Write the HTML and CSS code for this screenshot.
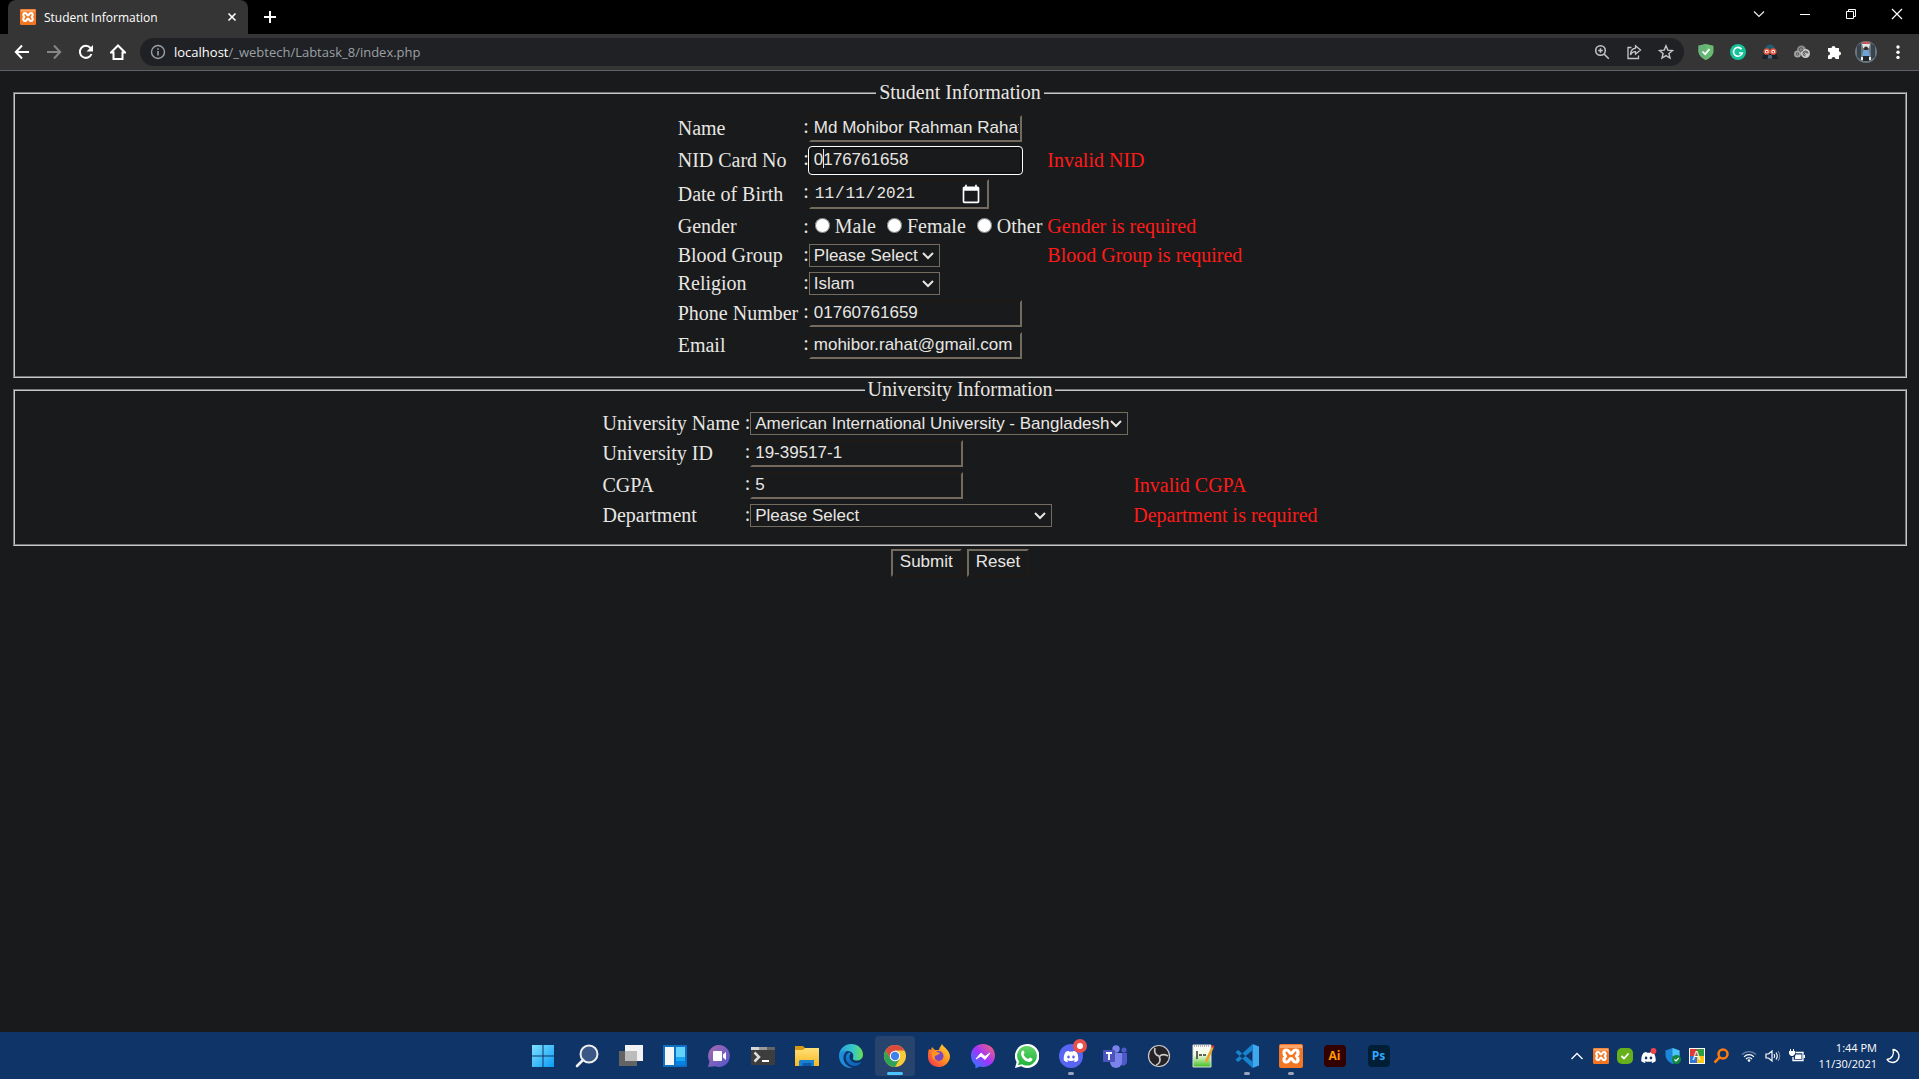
FILE: index.html
```html
<!DOCTYPE html>
<html lang="en">
<head>
<meta charset="utf-8">
<title>Student Information</title>
<link rel="stylesheet" href="styles.css">
</head>
<body>
<svg class="defs" aria-hidden="true">
  <defs>
    <linearGradient id="g-win" x1="0" y1="0" x2="1" y2="1"><stop offset="0" stop-color="#7fe0ff"/><stop offset="1" stop-color="#0a9cf5"/></linearGradient>
    <linearGradient id="g-chat" x1="0" y1="0" x2="1" y2="1"><stop offset="0" stop-color="#a86bb0"/><stop offset="1" stop-color="#5356cc"/></linearGradient>
    <linearGradient id="g-folder" x1="0" y1="0" x2="0" y2="1"><stop offset="0" stop-color="#ffe07a"/><stop offset="1" stop-color="#f8b820"/></linearGradient>
    <linearGradient id="g-edge" x1="0" y1="0" x2="1" y2="0"><stop offset="0" stop-color="#2a9fe0"/><stop offset=".6" stop-color="#36c8c8"/><stop offset="1" stop-color="#6be04c"/></linearGradient>
    <linearGradient id="g-edge2" x1="0" y1="0" x2="0" y2="1"><stop offset="0" stop-color="#1689dc"/><stop offset="1" stop-color="#0b62b8"/></linearGradient>
    <linearGradient id="g-fox" x1="1" y1="0" x2="0" y2="1"><stop offset="0" stop-color="#ffe43c"/><stop offset=".5" stop-color="#ff8a1e"/><stop offset="1" stop-color="#f0285a"/></linearGradient>
    <linearGradient id="g-msg" x1="0" y1="1" x2="1" y2="0"><stop offset="0" stop-color="#1a88ff"/><stop offset=".5" stop-color="#a033ff"/><stop offset="1" stop-color="#ff6a68"/></linearGradient>
    <linearGradient id="g-wa" x1="0" y1="0" x2="0" y2="1"><stop offset="0" stop-color="#5fd668"/><stop offset="1" stop-color="#22b13c"/></linearGradient>
    <linearGradient id="g-npp" x1="0" y1="0" x2="0" y2="1"><stop offset="0" stop-color="#fff"/><stop offset=".45" stop-color="#f0fbe0"/><stop offset="1" stop-color="#3fbf20"/></linearGradient>
    <symbol id="xampp" viewBox="0 0 24 24">
      <rect width="24" height="24" rx="2" fill="#f37623"/><path d="M1 1h22v3H1z" fill="#f9a468"/>
      <path d="M12 9.500C10 9.500 10.500 6 7.500 6S4 9.500 6.500 12C4 14.500 4.500 18 7.500 18s2.500-3.500 4.500-3.500S13.500 18 16.500 18s3.500-3.500 1-6c2.500-2.500 2-6-1-6S14 9.500 12 9.500z" fill="none" stroke="#fff" stroke-width="3.200" stroke-linejoin="round"/>
    </symbol>
    <symbol id="discord" viewBox="0 0 24 18">
      <path d="M20.300 1.500A19.800 19.800 0 0 0 15.400 0l-.7 1.300a18 18 0 0 0-5.400 0L8.600 0a19.800 19.800 0 0 0-4.900 1.500C.6 6.100-.3 10.600.1 15c2.100 1.500 4 2.400 6 3l1.300-2-2-1 .5-.4a14 14 0 0 0 12.200 0l.5.4-2 1 1.300 2c2-.6 4-1.500 6-3 .5-5.200-.8-9.700-3.600-13.500zM8 12.300c-1.200 0-2.100-1-2.100-2.400S6.800 7.500 8 7.500s2.200 1.100 2.100 2.400c0 1.300-.9 2.400-2.100 2.400zm8 0c-1.200 0-2.100-1-2.100-2.400s.9-2.400 2.100-2.400 2.200 1.100 2.100 2.400c0 1.300-.9 2.400-2.100 2.400z"/>
    </symbol>
  </defs>
</svg>

<header class="browser">
  <div class="titlebar">
    <div class="tab">
      <svg class="i16" viewBox="0 0 24 24"><use href="#xampp"/></svg>
      <span class="tab-title">Student Information</span>
      <button class="icon-btn" aria-label="Close tab"><svg class="i16" viewBox="0 0 16 16"><path d="M4.500 4.500l7 7M11.500 4.500l-7 7" stroke="#fff" stroke-width="1.600"/></svg></button>
    </div>
    <button class="icon-btn new-tab" aria-label="New tab"><svg class="i16" viewBox="0 0 16 16"><path d="M8 2v12M2 8h12" stroke="#fff" stroke-width="2"/></svg></button>
    <div class="window-controls">
      <button class="icon-btn" aria-label="Search tabs"><svg class="i16" viewBox="0 0 16 16"><path d="M3 5.500l5 5 5-5" fill="none" stroke="#eee" stroke-width="1.200"/></svg></button>
      <button class="icon-btn" aria-label="Minimize"><svg class="i16" viewBox="0 0 16 16"><path d="M3 8.500h10" stroke="#fff"/></svg></button>
      <button class="icon-btn" aria-label="Restore"><svg class="i16" viewBox="0 0 16 16"><path d="M3.500 5.500h7v7h-7zM5.500 5.500v-2h7v7h-2" fill="none" stroke="#fff"/></svg></button>
      <button class="icon-btn" aria-label="Close"><svg class="i16" viewBox="0 0 16 16"><path d="M3 3l10 10M13 3L3 13" stroke="#fff" stroke-width="1.200"/></svg></button>
    </div>
  </div>
  <div class="toolbar">
    <nav class="nav-buttons">
      <button class="icon-btn" aria-label="Back"><svg class="i16" viewBox="0 0 16 16"><path d="M15 8H2M8 1.500L1.800 8 8 14.500" fill="none" stroke="#fff" stroke-width="2"/></svg></button>
      <button class="icon-btn" aria-label="Forward"><svg class="i16" viewBox="0 0 16 16"><path d="M1 8h13M8 1.500L14.200 8 8 14.500" fill="none" stroke="#868686" stroke-width="2"/></svg></button>
      <button class="icon-btn" aria-label="Reload"><svg class="i16" viewBox="0 0 16 16"><path d="M13.500 10A6 6 0 1 1 12.500 4" fill="none" stroke="#fff" stroke-width="2"/><path d="M15 1v6.500H8.500z" fill="#fff"/></svg></button>
      <button class="icon-btn" aria-label="Home"><svg class="i16" viewBox="0 0 16 16"><path d="M1 8.500l7-7 7 7h-2.500V15h-9V8.500z" fill="none" stroke="#fff" stroke-width="2"/></svg></button>
    </nav>
    <div class="omnibox">
      <svg class="i16" viewBox="0 0 16 16"><circle cx="8" cy="8" r="6.500" fill="none" stroke="#9aa0a6" stroke-width="1.400"/><path d="M8 7v4.500M8 4.200v1.600" stroke="#9aa0a6" stroke-width="1.600"/></svg>
      <a class="url" href="#"><span class="host">localhost</span>/_webtech/Labtask_8/index.php</a>
      <div class="omnibox-actions">
        <button class="icon-btn" aria-label="Zoom"><svg class="i16" viewBox="0 0 16 16"><circle cx="6.500" cy="6.500" r="4.800" fill="none" stroke="#c4c7c9" stroke-width="1.500"/><path d="M10 10l4.800 4.800M4.200 6.500h4.600M6.500 4.200v4.600" stroke="#c4c7c9" stroke-width="1.500"/></svg></button>
        <button class="icon-btn" aria-label="Share"><svg class="i16" viewBox="0 0 16 16"><path d="M5.500 3.500H2v11h10.500V11.500M9.500 1.800l5 4.200-5 4.200V7.700C7 7.700 5.500 8.500 4.500 11c0-4 2-6.300 5-6.800z" fill="none" stroke="#c4c7c9" stroke-width="1.300"/></svg></button>
        <button class="icon-btn" aria-label="Bookmark"><svg class="i16" viewBox="0 0 16 16"><path d="M8 1.800l1.800 4.300 4.700.4-3.600 3 1.100 4.600-4-2.500-4 2.500 1.100-4.600-3.600-3 4.700-.4z" fill="none" stroke="#c4c7c9" stroke-width="1.400"/></svg></button>
      </div>
    </div>
    <div class="extensions">
      <svg class="i16" viewBox="0 0 16 16"><path d="M8 0l7.500 1.800V7c0 4-3 7-7.500 9C3.500 14 .5 11 .5 7V1.800z" fill="#68bc71"/><path d="M8 0v16C3.500 14 .5 11 .5 7V1.800z" fill="#67b279"/><path d="M4.500 7.500l2.600 2.700 4.400-5" fill="none" stroke="#fff" stroke-width="1.800"/></svg>
      <svg class="i16" viewBox="0 0 16 16"><circle cx="8" cy="8" r="8" fill="#15c39a"/><path d="M11.500 5.200A4.400 4.400 0 1 0 12.200 9H9" fill="none" stroke="#fff" stroke-width="1.600"/></svg>
      <svg class="i16" viewBox="0 0 16 16"><path d="M8 0.500c4 0 5.500 3 5.500 6.500L16 15H0l2.500-8C2.500 3.500 4 .5 8 .5z" fill="#17222e"/><path d="M8 .5c3 0 4.800 2 5.200 4.500H2.800C3.200 2.500 5 .5 8 .5z" fill="#275a6e"/><circle cx="4.800" cy="7.500" r="2.600" fill="#fff" stroke="#e0563b" stroke-width="1.500"/><circle cx="11.200" cy="7.500" r="2.600" fill="#fff" stroke="#e0563b" stroke-width="1.500"/><path d="M4 7h1.600v1.600H4zM10.400 7H12v1.600h-1.600z" fill="#c22"/><path d="M6.500 11h3l1 3.500h-5z" fill="#53687c"/></svg>
      <svg class="i16" viewBox="0 0 16 16"><circle cx="7.500" cy="6" r="4.500" fill="#8c8c8c"/><circle cx="3.500" cy="10" r="3.500" fill="#a5a5a5"/><circle cx="11.500" cy="9.500" r="4.500" fill="#cfcfcf"/><g fill="none" stroke="#555"><circle cx="7" cy="5.500" r="1.800"/><circle cx="3.500" cy="10" r="1.300"/><path d="M14 9.500a2.500 2.500 0 1 0-2.500 2.500M12.800 9.500a1.200 1.200 0 1 0-1.200 1"/></g></svg>
      <svg class="i16" viewBox="0 0 16 16"><path d="M2 4h3.500a2 2 0 1 1 4 0H13v3.500a2 2 0 1 1 0 4V15H9.500a2 2 0 1 0-4 0H2v-3.500a2 2 0 1 0 0-4z" fill="#fff"/></svg>
      <svg class="i22" viewBox="0 0 22 22"><circle cx="11" cy="11" r="11" fill="#6b7780"/><path d="M2 5l4-3v17l-4-3zM16 2l4 3v11l-4 3z" fill="#39444d"/><path d="M7 .8h8V3H7z" fill="#c55b55"/><path d="M7 3h8l-1 4H8z" fill="#dfe5e8"/><circle cx="11" cy="7.500" r="2" fill="#3b2a22"/><path d="M8.500 9h5l1.500 6H7z" fill="#6fa3d8"/><path d="M8 15h6v5H8z" fill="#20262c"/><path d="M6 16h2v3H6zM14 16h2v3h-2z" fill="#f1f1f1"/></svg>
      <svg class="i16" viewBox="0 0 16 16"><g fill="#fff"><circle cx="8" cy="3" r="1.700"/><circle cx="8" cy="8.200" r="1.700"/><circle cx="8" cy="13.400" r="1.700"/></g></svg>
    </div>
  </div>
</header>

<main class="page">
  <form>
    <fieldset>
      <legend>Student Information</legend>
      <table>
        <tr><td><label for="name">Name</label></td><td>:<input class="field" id="name" type="text" value="Md Mohibor Rahman Rahat"></td><td></td></tr>
        <tr><td><label for="nid">NID Card No</label></td><td>:<span class="with-caret"><input class="field focused" id="nid" type="text" value="0176761658"></span></td><td class="error">Invalid NID</td></tr>
        <tr><td><label for="dob">Date of Birth</label></td><td>:<input class="field date" id="dob" type="date" value="2021-11-11"></td><td></td></tr>
        <tr class="choices"><td>Gender</td><td>:<input type="radio" name="gender" id="male"><label for="male"> Male</label> <input type="radio" name="gender" id="female"><label for="female"> Female</label> <input type="radio" name="gender" id="other"><label for="other"> Other</label></td><td class="error">Gender is required</td></tr>
        <tr><td><label for="blood">Blood Group</label></td><td>:<select class="w-small" id="blood"><option>Please Select</option></select></td><td class="error">Blood Group is required</td></tr>
        <tr><td><label for="religion">Religion</label></td><td>:<select class="w-small" id="religion"><option>Islam</option></select></td><td></td></tr>
        <tr><td><label for="phone">Phone Number</label></td><td>:<input class="field" id="phone" type="text" value="01760761659"></td><td></td></tr>
        <tr><td><label for="email">Email</label></td><td>:<input class="field" id="email" type="text" value="mohibor.rahat@gmail.com"></td><td></td></tr>
      </table>
    </fieldset>
    <fieldset>
      <legend>University Information</legend>
      <table>
        <tr><td><label for="uni">University Name</label></td><td>:<select class="w-large" id="uni"><option>American International University - Bangladesh</option></select></td><td></td></tr>
        <tr><td><label for="uid">University ID</label></td><td>:<input class="field" id="uid" type="text" value="19-39517-1"></td><td></td></tr>
        <tr><td><label for="cgpa">CGPA</label></td><td>:<input class="field" id="cgpa" type="text" value="5"></td><td class="error">Invalid CGPA</td></tr>
        <tr><td><label for="dept">Department</label></td><td>:<select class="w-medium" id="dept"><option>Please Select</option></select></td><td class="error">Department is required</td></tr>
      </table>
    </fieldset>
    <div class="actions"><button class="btn" type="button">Submit</button><button class="btn" type="reset">Reset</button></div>
  </form>
</main>

<footer class="taskbar">
  <div class="apps">
    <button class="app" aria-label="Start"><svg viewBox="0 0 24 24"><path d="M1 1h10.500v10.500H1zM12.500 1H23v10.500H12.500zM1 12.500h10.500V23H1zM12.500 12.500H23V23H12.500z" fill="url(#g-win)"/></svg></button>
    <button class="app" aria-label="Search"><svg viewBox="0 0 24 24"><circle cx="14" cy="10" r="8.500" fill="#3b5786" stroke="#eee" stroke-width="2"/><path d="M8 16l-6 6" stroke="#eee" stroke-width="2.600" stroke-linecap="round"/></svg></button>
    <button class="app" aria-label="Task view"><svg viewBox="0 0 24 24"><path d="M0 7h18v15H0z" fill="#636363"/><path d="M6 1h18v16H6z" fill="#f2f2f2"/><path d="M6 7h12v10H6z" fill="#bcbcbc"/></svg></button>
    <button class="app" aria-label="Widgets"><svg viewBox="0 0 24 24"><rect y="1" width="24" height="22" rx="1" fill="#0e6fc4"/><path d="M2 3h9v18H2z" fill="#f5f5f5"/><path d="M13 3h9v10h-9z" fill="#63d3fb"/><path d="M13 13h9v4h-9z" fill="#1aa5f5"/><path d="M13 17h9v4h-9z" fill="#0584e6"/></svg></button>
    <button class="app" aria-label="Chat"><svg viewBox="0 0 24 24"><path d="M12 1a11 11 0 1 1-4 21.300L1 23l1.500-5.500A11 11 0 0 1 12 1z" fill="url(#g-chat)"/><rect x="6" y="7" width="9" height="10" rx="1" fill="#fff"/><path d="M16 10.500l3-2.500v8l-3-2.500z" fill="#fff"/></svg></button>
    <button class="app" aria-label="Terminal"><svg viewBox="0 0 24 24"><path d="M0 3h24v18H0z" fill="#3d3d3d"/><path d="M0 3h8v3H0z" fill="#d5d5d5"/><path d="M8 3h8v3H8z" fill="#999"/><path d="M16 3h8v3h-8z" fill="#666"/><path d="M3.500 8.500L8 13l-4.500 4.500" fill="none" stroke="#ddd" stroke-width="2.500"/><path d="M11 16h7v2h-7z" fill="#fff"/></svg></button>
    <button class="app" aria-label="File Explorer"><svg viewBox="0 0 24 24"><path d="M0 2h8l3 3v4H0z" fill="#d69a10"/><path d="M0 6h8l2-2h14v18H0z" fill="url(#g-folder)"/><path d="M5 16h14v6H4v-5z" fill="#1c80d0"/><path d="M7.500 19h9v3h-9z" fill="#0b5ba8"/></svg></button>
    <button class="app" aria-label="Edge"><svg viewBox="0 0 24 24"><path d="M0 11C1 4 6 0 12 0c7 0 12 5 12 10.500 0 4-3 6-6.500 6-3 0-4-1.500-3.500-2.500C15 11 14 8 9.500 7 5 6.500 1.500 8 0 11z" fill="url(#g-edge)"/><path d="M0 12c0-4 4-6 8-5-2 1.500-4 4-3.500 8 .5 5 5 8 9.500 8.800C5.500 25 0 19 0 12z" fill="#1e8ddc"/><path d="M10 8.500c-4 2-4 7-1 10.500 3.500 4 10 4 13.500-1-5 2.500-12 .5-12-5.500 0-1.500.5-3 2-3.500z" fill="url(#g-edge2)"/></svg></button>
    <button class="app active" aria-label="Chrome"><svg viewBox="0 0 24 24"><circle cx="12" cy="12" r="11" fill="#f9cb38"/><path d="M2.500 6.500A11 11 0 0 1 21.500 6.500H12L7.300 14.700z" fill="#d94b3d"/><path d="M2.500 6.500A11 11 0 0 0 12 23l4.700-8.300H7.300z" fill="#2ea258"/><circle cx="12" cy="12" r="5.200" fill="#fff"/><circle cx="12" cy="12" r="4.200" fill="#3d82ea"/></svg></button>
    <button class="app" aria-label="Firefox"><svg viewBox="0 0 24 24"><path d="M2 5l2 1 1-3 3 3h4c0-2 2-4 3-6 1 3 7 5 8 12 0 6-5 11-11 11S1 19 1 13c0-3 0-5 1-8z" fill="url(#g-fox)"/><circle cx="11.500" cy="12" r="5" fill="#7b45c8"/><path d="M5 8c3-1 5 0 8 1-1 2-4 2-5 3-1 2 0 4 3 5-5 0-7-4-6-9z" fill="#ff9420"/></svg></button>
    <button class="app" aria-label="Messenger"><svg viewBox="0 0 24 24"><path d="M12 0c7 0 12 5 12 11.500S19 23 12 23l-3.500-.5L4.500 24.500 4.300 21C1.500 18.500 0 15.500 0 11.500 0 5 5 0 12 0z" fill="url(#g-msg)"/><path d="M5 15l5-6 4 3.500L19 9l-5 6.500-4-3.500z" fill="#fff" stroke="#fff"/></svg></button>
    <button class="app" aria-label="WhatsApp"><svg viewBox="0 0 24 24"><path d="M12 0a12 12 0 1 1-5.800 22.300L0 24l1.600-6A12 12 0 0 1 12 0z" fill="#fff"/><path d="M12 2a9.800 9.800 0 1 1-5 18.200L3 21.300l1-3.800A9.800 9.800 0 0 1 12 2z" fill="url(#g-wa)"/><path d="M8 6.500c1 0 1.500 2 1.500 2.500l-1 1.500c1 2 2.500 3.500 4.800 4.500l1.500-1.500c1 .3 2.700 1 2.700 1.500 0 2-2 3-3.500 3C9.500 17.500 6 12.500 6 9.500c0-1.500 1-3 2-3z" fill="#fff"/></svg></button>
    <button class="app running" aria-label="Discord"><svg viewBox="0 0 24 24"><circle cx="12" cy="12" r="12" fill="#5865f2"/><svg x="4.500" y="6.500" width="15" height="12" viewBox="0 0 24 18" fill="#fff"><use href="#discord"/></svg></svg><svg class="badge" viewBox="0 0 14 14"><circle cx="7" cy="7" r="7" fill="#e8504e"/><circle cx="7" cy="7" r="3" fill="#fff"/></svg></button>
    <button class="app" aria-label="Teams"><svg viewBox="0 0 24 24"><circle cx="13" cy="5" r="3.700" fill="#7b83eb"/><circle cx="21" cy="6" r="2.600" fill="#5059c9"/><path d="M17 9h7v8a4 4 0 0 1-6 4z" fill="#5059c9"/><path d="M7 9h12v9a6 6 0 0 1-12 0z" fill="#7b83eb"/><rect y="6" width="12" height="12" rx="1" fill="#4b53bc"/><path d="M3 9h6M6 9v7" stroke="#fff" stroke-width="1.800"/></svg></button>
    <button class="app" aria-label="OBS"><svg viewBox="0 0 24 24"><circle cx="12" cy="12" r="10.500" fill="#252225" stroke="#ccc" stroke-width="1.200"/><path d="M8 4c-1 4 0 7 4 8M21 12c-4-2-7-2-9 1M9 21c4-1 5-5 3-9" fill="none" stroke="#c8c8c8" stroke-width="1.700"/></svg></button>
    <button class="app" aria-label="Notepad++"><svg viewBox="0 0 24 24"><path d="M2 1h18v22H2z" fill="url(#g-npp)" stroke="#ddd"/><path d="M3 2h16" stroke="#777" stroke-dasharray="1 1"/><path d="M6 7v8M8 11h3M12 11h3" stroke="#333" stroke-width="1.500"/><path d="M21 2l2 1-6 14-3 2 .5-3.500z" fill="#eca22c"/><path d="M21 1l2.500 1-.8 2-2.400-1z" fill="#c33"/></svg></button>
    <button class="app running" aria-label="Visual Studio Code"><svg viewBox="0 0 24 24"><path d="M17.500 0L24 2.500v19L17.500 24z" fill="#3fa9f0"/><path d="M17.500 0v6.500L3 18l-2.500-2.200zM17.500 24v-6.500L3 6 .5 8.200z" fill="#1684cf"/></svg></button>
    <button class="app running" aria-label="XAMPP"><svg viewBox="0 0 24 24"><use href="#xampp"/></svg></button>
    <button class="app" aria-label="Illustrator"><span class="adobe ai">Ai</span></button>
    <button class="app" aria-label="Photoshop"><span class="adobe ps">Ps</span></button>
  </div>
  <div class="tray">
    <div class="tray-icons">
      <svg class="i16" viewBox="0 0 16 16"><path d="M2.500 11L8 5.500l5.500 5.500" fill="none" stroke="#fff" stroke-width="1.300"/></svg>
      <svg class="i16" viewBox="0 0 24 24"><use href="#xampp"/></svg>
      <svg class="i16" viewBox="0 0 16 16"><rect width="16" height="16" rx="5" fill="#66b01c"/><path d="M4.500 8l2.500 2.500 4.500-5" fill="none" stroke="#fff" stroke-width="1.800"/></svg>
      <svg class="i16" viewBox="0 0 16 16"><svg x="0" y="4" width="15" height="11" viewBox="0 0 24 18" fill="#fff"><use href="#discord"/></svg><circle cx="12.500" cy="3" r="2.900" fill="#f0434a"/></svg>
      <svg class="i16" viewBox="0 0 16 16"><path d="M7.500 0L14.500 2.500V7c0 4-3 7-7 9-4-2-7-5-7-9V2.500z" fill="#1d86d8"/><path d="M7.500 0L14.500 2.500V8h-7z" fill="#4cc2f5"/><circle cx="11.500" cy="11.500" r="4.500" fill="#118a3e"/><path d="M9.500 11.500l1.500 1.500 2.800-3" fill="none" stroke="#fff" stroke-width="1.200"/></svg>
      <span class="a-icon">A</span>
      <svg class="i16" viewBox="0 0 16 16"><circle cx="10" cy="6" r="4.500" fill="none" stroke="#ff7a0c" stroke-width="2.500"/><path d="M6.500 9.500L1.500 14.500" stroke="#ff7a0c" stroke-width="2.500"/></svg>
    </div>
    <div class="system-icons">
      <svg class="i16" viewBox="0 0 16 16"><g fill="none" stroke="#fff" stroke-width="1.200"><path d="M1 6.500a10 10 0 0 1 14 0" opacity=".4"/><path d="M3 8.800a7 7 0 0 1 10 0M5 11a4.200 4.200 0 0 1 6 0"/></g><circle cx="8" cy="12.500" r="1.300" fill="#fff"/></svg>
      <svg class="i16" viewBox="0 0 16 16"><g fill="none" stroke="#fff" stroke-width="1.200"><path d="M1 6h2.500L7 3v10L3.500 10H1zM9 6q1.500 2 0 4M11 4.500q2.500 3.500 0 7"/><path d="M13 3q3.500 5 0 10" opacity=".4"/></g></svg>
      <svg class="i16" viewBox="0 0 16 16"><path d="M6.500 4.500H14v8H4V9" fill="none" stroke="#fff" stroke-width="1.300"/><path d="M7 6.500h5.500v4.500H6V8zM14.500 7H16v3h-1.500zM0 3h6v3L4 8H2L0 6zM1 1h1v2H1zM4 1h1v2H4z" fill="#fff"/></svg>
    </div>
    <div class="clock"><span>1:44 PM</span><span>11/30/2021</span></div>
    <svg class="i16" viewBox="0 0 16 16"><path d="M8 1.500A6.500 6.500 0 1 1 2 11.500C7 11 9.500 6.500 8 1.500z" fill="none" stroke="#fff" stroke-width="1.300" stroke-linejoin="round"/></svg>
  </div>
</footer>
</body>
</html>
```

FILE: styles.css
```css
* { box-sizing: border-box; }

body {
  margin: 0;
  min-height: 100vh;
  display: flex;
  flex-direction: column;
  background: #181a1b;
  color: #e8e6e3;
  color-scheme: dark;
  font-family: "Liberation Serif", serif;
  font-size: 20px;
}

svg { display: block; flex: none; }
.defs { position: absolute; width: 0; height: 0; }
.i16 { width: 16px; height: 16px; }
.i22 { width: 22px; height: 22px; }
.icon-btn { display: block; margin: 0; padding: 0; border: 0; background: none; }

/* Browser frame */
.browser { font-family: "Open Sans", "Noto Sans", sans-serif; font-size: 12px; }
.titlebar { display: flex; align-items: center; height: 34px; padding-left: 8px; background: #000; }
.tab {
  display: flex;
  align-items: center;
  gap: 8px;
  width: 240px;
  height: 34px;
  padding: 0 8px 0 12px;
  border-radius: 8px 8px 0 0;
  background: #353535;
  color: #fff;
  font-size: 12px;
}
.tab-title { flex: 1; }
.new-tab { margin-left: 14px; }
.window-controls { display: flex; gap: 30px; margin: 0 14px 6px auto; }

.toolbar {
  display: flex;
  align-items: center;
  height: 37px;
  padding: 0 13px 0 14px;
  border-bottom: 1px solid #5f6368;
  background: #353535;
}
.nav-buttons { display: flex; gap: 16px; margin-right: 14px; }
.omnibox {
  display: flex;
  flex: 1;
  align-items: center;
  gap: 8px;
  height: 28px;
  padding: 0 10px;
  border-radius: 14px;
  background: #202124;
  font-size: 13px;
}
.url { flex: 1; color: #9aa0a6; text-decoration: none; }
.host { color: #fff; }
.omnibox-actions { display: flex; gap: 16px; }
.extensions { display: flex; align-items: center; gap: 16px; margin-left: 14px; }
.extensions .i22 { margin: 0 -3px; }

/* Form */
.page { flex: 1; padding: 10px 9px 10px 10px; }
fieldset { margin: 0 3px; padding: 7px 15px 13px; border: 2px groove #c8c8c8; }
legend { margin: 0 auto; padding: 0 3px; line-height: 23px; }
table { margin: 0 auto; border-spacing: 3px; }
td { padding: 1px; white-space: nowrap; line-height: 21px; }
.choices td { line-height: 25px; }
.error { color: #ff1a1a; }

.field, select, .btn {
  margin: 0;
  border-radius: 0;
  background: #181a1b;
  color: #e8e6e3;
  font-family: "Liberation Sans", Arial, sans-serif;
  font-size: 17px;
}
.field {
  width: 213px;
  height: 27px;
  padding: 0 1px 2px 3px;
  border: 2px solid;
  border-color: #1f1a15 #736b5e #736b5e #1f1a15;
}
.focused { border-color: #101213; border-radius: 3px; outline: 1px solid #fff; outline-offset: 0; }
.with-caret { position: relative; }
.with-caret::after {
  content: "";
  position: absolute;
  top: 2px;
  left: 14px;
  width: 1px;
  height: 19px;
  background: #e8e6e3;
}
.date { width: 180px; height: 30px; padding: 0 6px 0 3px; font-family: "Liberation Mono", monospace; font-size: 16px; }
.date::-webkit-calendar-picker-indicator { width: 20px; height: 20px; padding: 0; background-size: 20px 20px; }
select {
  height: 23px;
  padding: 0 0 0 4px;
  border: 1px solid #736b5e;
  appearance: none;
  background: #181a1b url("data:image/svg+xml,%3Csvg xmlns='http://www.w3.org/2000/svg' width='12' height='8'%3E%3Cpath d='M1 1l5 5 5-5' fill='none' stroke='%23e8e6e3' stroke-width='2'/%3E%3C/svg%3E") no-repeat right 5px center;
}
.w-small { width: 131px; }
.w-medium { width: 302px; }
.w-large { width: 378px; }
input[type="radio"] { width: 15px; height: 15px; margin: 0 0 0 6px; color-scheme: light; }
.actions { display: flex; justify-content: center; gap: 5px; padding-top: 3px; }
.btn { height: 28px; padding: 0 7px 2px; border: 2px solid; border-color: #736b5e #1f1a15 #1f1a15 #736b5e; }

/* Taskbar */
.taskbar {
  display: grid;
  grid-template-columns: 1fr auto 1fr;
  align-items: center;
  height: 47px;
  padding-left: 2px;
  background: #0f3468;
  color: #fff;
  font-family: "Open Sans", "Noto Sans", sans-serif;
}
.apps { grid-column: 2; display: flex; gap: 4px; }
.app {
  position: relative;
  display: flex;
  align-items: center;
  justify-content: center;
  width: 40px;
  height: 40px;
  padding: 0;
  border: 0;
  border-radius: 4px;
  background: none;
}
.app > svg { width: 24px; height: 24px; }
.app .badge { position: absolute; top: 3px; right: 4px; width: 14px; height: 14px; }
.active { background: #27446f; }
.active::after, .running::after {
  content: "";
  position: absolute;
  bottom: 1px;
  left: 17px;
  width: 6px;
  height: 3px;
  border-radius: 2px;
  background: #98a5ba;
}
.active::after { left: 12px; width: 16px; background: #4cc2ff; }
.adobe { width: 22px; height: 22px; border-radius: 4px; font: bold 12px/21px "Open Sans", sans-serif; }
.ai { background: #330000; color: #ff9a00; }
.ps { background: #001e36; color: #31a8ff; }
.tray { display: flex; align-items: center; justify-content: flex-end; padding-right: 18px; }
.tray-icons { display: flex; gap: 8px; }
.a-icon {
  width: 16px;
  height: 16px;
  background: conic-gradient(#2e9e3e 25%, #ffc61a 0 50%, #3276d8 0 75%, #e03c2c 0);
  border: 1px solid #fff;
  font: 12px/14px "Liberation Sans", sans-serif;
  text-align: center;
}
.system-icons { display: flex; gap: 8px; margin: 0 14px 0 12px; }
.clock { display: flex; flex-direction: column; margin-right: 8px; font-size: 11px; line-height: 16px; text-align: right; }
```
